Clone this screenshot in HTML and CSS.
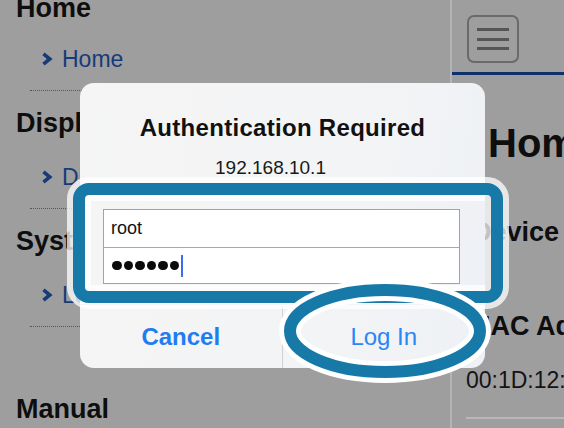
FILE: index.html
```html
<!DOCTYPE html>
<html lang="en">
<head>
<meta charset="utf-8">
<title>Authentication Required</title>
<link rel="stylesheet" href="styles.css">
</head>
<body>
<div class="page">
  <aside class="sidebar">
    <section class="nav-section first">
      <h3 class="nav-head">Home</h3>
      <a class="nav-link"><svg class="chev" width="12" height="14" viewBox="0 0 12 14"><polyline points="2.5,1.8 8.8,7 2.5,12.2" fill="none" stroke="#163b78" stroke-width="3.6" stroke-linejoin="miter"/></svg>Home</a>
    </section>
    <section class="nav-section">
      <h3 class="nav-head">Display</h3>
      <a class="nav-link"><svg class="chev" width="12" height="14" viewBox="0 0 12 14"><polyline points="2.5,1.8 8.8,7 2.5,12.2" fill="none" stroke="#163b78" stroke-width="3.6" stroke-linejoin="miter"/></svg>Display Settings</a>
    </section>
    <section class="nav-section">
      <h3 class="nav-head">System</h3>
      <a class="nav-link"><svg class="chev" width="12" height="14" viewBox="0 0 12 14"><polyline points="2.5,1.8 8.8,7 2.5,12.2" fill="none" stroke="#163b78" stroke-width="3.6" stroke-linejoin="miter"/></svg>Log</a>
    </section>
    <h3 class="nav-head manual">Manual</h3>
  </aside>
  <main class="content">
    <header class="topbar">
      <button class="burger" aria-label="Menu"><span></span><span></span><span></span></button>
    </header>
    <h1 class="title">Home</h1>
    <h2 class="sub device">Device</h2>
    <h2 class="sub mac">MAC Address</h2>
    <p class="value">00:1D:12:34:56:78</p>
  </main>
</div>

<div class="dialog">
  <div class="dlg-title">Authentication Required</div>
  <div class="dlg-host">192.168.10.1</div>
  <div class="fields">
    <div class="field">root</div>
    <div class="field pw"><span class="dot"></span><span class="dot"></span><span class="dot"></span><span class="dot"></span><span class="dot"></span><span class="dot"></span><span class="caret"></span></div>
  </div>
  <div class="actions">
    <div class="btn cancel">Cancel</div>
    <div class="btn login">Log In</div>
  </div>
</div>

<svg class="annot" width="564" height="428" viewBox="0 0 564 428">
  <rect x="79" y="189" width="418" height="108" rx="10" fill="none" stroke="rgba(255,255,255,0.75)" stroke-width="24"/>
  <rect x="79" y="189" width="418" height="108" rx="10" fill="none" stroke="#1679a8" stroke-width="12"/>
  <ellipse cx="385" cy="331" rx="95" ry="41" fill="none" stroke="#ffffff" stroke-width="22"/>
  <ellipse cx="385" cy="331" rx="95" ry="41" fill="none" stroke="#1679a8" stroke-width="12"/>
</svg>
</body>
</html>
```

FILE: styles.css
```css
* { box-sizing: border-box; }
html, body { margin: 0; padding: 0; }
body {
  width: 564px;
  height: 428px;
  overflow: hidden;
  background: #9e9e9e;
  font-family: "Liberation Sans", Arial, sans-serif;
  position: relative;
}
.page {
  display: grid;
  grid-template-columns: 450px 1fr;
  height: 428px;
}
.sidebar {
  overflow: hidden;
  padding-left: 16px;
  margin-top: -11px;
}
.nav-section {
  border-bottom: 1px dotted #555;
  margin-left: 14px;
  margin-right: 20px;
  padding-bottom: 17px;
  margin-bottom: 16px;
}
.nav-section .nav-head { margin-left: -14px; }
.nav-section.first .nav-head { margin-top: 3px; }
.nav-section.first .nav-link { margin-top: 21px; }
.nav-head {
  margin: 0;
  font-size: 27px;
  line-height: 32px;
  font-weight: 700;
  color: #0e0e0e;
}
.nav-link {
  display: flex;
  align-items: center;
  margin-top: 24px;
  margin-left: 11px;
  height: 28px;
  font-size: 23px;
  color: #163b78;
  white-space: nowrap;
}
.chev {
  flex: none;
  margin-right: 9px;
}
.manual { margin-top: 66px; }

.content {
  border-left: 2px solid #b4b4b4;
  overflow: hidden;
  white-space: nowrap;
}
.topbar {
  height: 75px;
  border-bottom: 3px solid #10306c;
  padding: 15px 0 0 15px;
}
.burger {
  width: 52px;
  height: 48px;
  border: 2px solid #6a6a6a;
  border-radius: 7px;
  background: transparent;
  padding: 0;
  display: flex;
  flex-direction: column;
  align-items: center;
  justify-content: center;
  gap: 6.5px;
}
.burger span {
  display: block;
  width: 32px;
  height: 3px;
  background: #555;
}
.title {
  margin: 44px 0 0 36px;
  font-size: 40px;
  line-height: 48px;
  font-weight: 700;
  color: #0e0e0e;
}
.sub {
  margin: 0;
  font-size: 27px;
  line-height: 34px;
  font-weight: 700;
  color: #0e0e0e;
}
.device { margin-top: 48px; padding-left: 20px; }
.mac { margin-top: 60px; padding-left: 16px; }
.value {
  margin: 24px 0 0 14px;
  font-size: 23px;
  line-height: 26px;
  color: #141414;
  padding-bottom: 24px;
  border-bottom: 2px solid #b8b8b8;
}

.dialog {
  position: absolute;
  left: 80px;
  top: 83px;
  width: 405px;
  height: 285px;
  border-radius: 14px;
  background: linear-gradient(100deg, #f5f5f5 0%, #f3f4f5 60%, #eef1f5 100%);
  display: flex;
  flex-direction: column;
  align-items: stretch;
  padding-top: 30px;
}
.dlg-title {
  text-align: center;
  font-size: 24px;
  line-height: 30px;
  font-weight: 700;
  letter-spacing: 0.3px;
  color: #111;
}
.dlg-host {
  text-align: center;
  margin-top: 14px;
  padding-right: 24px;
  font-size: 19px;
  line-height: 22px;
  color: #1a1a1a;
}
.fields {
  margin: 30px 25px 0 23px;
  background: #fff;
  border: 1px solid #a3a3a3;
}
.field {
  height: 37px;
  display: flex;
  align-items: center;
  padding-left: 7px;
  font-size: 18px;
  color: #111;
}
.field + .field { border-top: 1px solid #a8a8a8; height: 36px; }
.pw { padding-left: 8px; gap: 2px; }
.dot {
  width: 9.5px;
  height: 9.5px;
  border-radius: 50%;
  background: #0a0a0a;
}
.caret {
  width: 2px;
  height: 22px;
  margin-left: 0;
  background: #3a6cf0;
}
.actions {
  margin-top: 20px;
  flex: 1;
  display: grid;
  grid-template-columns: 1fr 1fr;
  border-top: 1px solid #d2d2d2;
}
.btn {
  display: flex;
  align-items: center;
  justify-content: center;
  font-size: 24px;
  color: #1f7df2;
}
.cancel { font-weight: 700; border-right: 1px solid #d2d2d2; }
.login { color: #2a86f4; }

.annot {
  position: absolute;
  left: 0;
  top: 0;
  pointer-events: none;
}
```
